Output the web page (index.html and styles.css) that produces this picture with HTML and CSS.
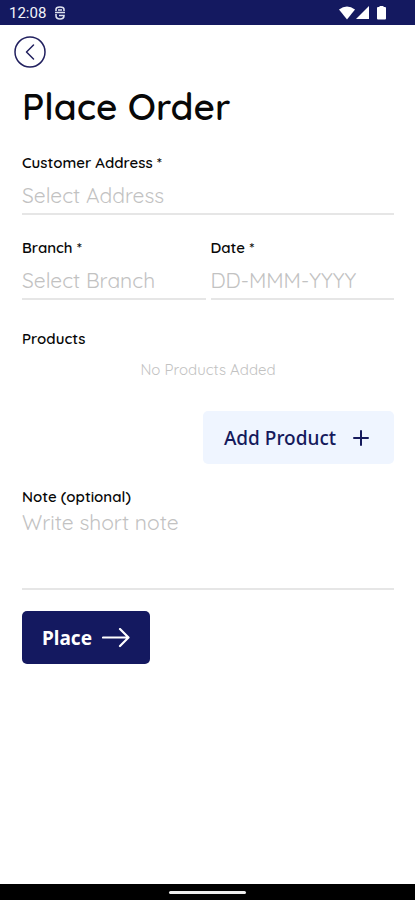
FILE: index.html
```html
<!DOCTYPE html>
<html lang="en">
<head>
<meta charset="utf-8">
<meta name="viewport" content="width=device-width, initial-scale=1">
<title>Place Order</title>
<link rel="stylesheet" href="styles.css">
</head>
<body>
<div class="status">
  <span class="clock">12:08</span>
  <svg class="app-icon" viewBox="0 0 12 14" width="12" height="14" aria-hidden="true"><path d="M2 5V3.500Q2 1 6 1t4 2.500V5M1 6.500h10M4 4h4M2 8v1.500Q2 13 6 13t4-3.500H5" fill="none" stroke="#dfe3ef" stroke-width="1.600"/></svg>
  <svg class="signals" viewBox="0 0 48 16" width="48" height="16" aria-hidden="true"><g fill="#fff"><path d="M0 4.500Q8-1.500 16 4.500L8 14.500z"/><path d="M30 1v13H17z"/><path d="M38 3q0-1 1-1h1.500V1h4v1H46q1 0 1 1v10.500q0 1-1 1h-7q-1 0-1-1z"/></g></svg>
</div>
<main class="page">
  <button class="back" type="button" aria-label="Back"><svg viewBox="0 0 32 32" width="32" height="32"><circle cx="16" cy="16" r="15" fill="none" stroke="#21205f" stroke-width="1.500"/><path d="M19.500 9L12.500 16l7 7" fill="none" stroke="#21205f" stroke-width="1.500" stroke-linecap="round" stroke-linejoin="round"/></svg></button>
  <form class="form">
    <h1>Place Order</h1>
    <div class="field">
      <label for="address">Customer Address *</label>
      <input id="address" type="text" placeholder="Select Address">
    </div>
    <div class="pair">
      <div class="field">
        <label for="branch">Branch *</label>
        <input id="branch" type="text" placeholder="Select Branch">
      </div>
      <div class="field">
        <label for="date">Date *</label>
        <input id="date" type="text" placeholder="DD-MMM-YYYY">
      </div>
    </div>
    <section class="products">
      <h2>Products</h2>
      <p>No Products Added</p>
      <button class="add" type="button"><span>Add Product</span><svg viewBox="0 0 16 16" width="16" height="16" aria-hidden="true"><path d="M8 1v14M1 8h14" stroke="#151a5c" stroke-width="2" stroke-linecap="round"/></svg></button>
    </section>
    <div class="field note">
      <label for="note">Note (optional)</label>
      <textarea id="note" placeholder="Write short note"></textarea>
    </div>
    <button class="place" type="submit"><span>Place</span><svg viewBox="0 0 28 20" width="28" height="20" aria-hidden="true"><path d="M1 9.500h25M18 1l8.500 8.500L18 18" fill="none" stroke="#fff" stroke-width="2.200" stroke-linecap="round" stroke-linejoin="round"/></svg></button>
  </form>
</main>
<div class="nav"><span class="handle"></span></div>
</body>
</html>
```
FILE: styles.css
```css
* { box-sizing: border-box; }

body {
  margin: 0;
  min-height: 100vh;
  display: flex;
  flex-direction: column;
  background: #fff;
  color: #080808;
  font-family: Quicksand, Lato, sans-serif;
}

button, input, textarea { font-family: inherit; }
button { border: 0; cursor: pointer; }

.status {
  display: flex;
  align-items: center;
  height: 25px;
  padding: 0 28px 0 9px;
  background: #141960;
  color: #f2f3f8;
}
.clock { font: 400 15px/24px Roboto, sans-serif; }
.app-icon { margin-left: 8px; }
.signals { margin-left: auto; }

.page { flex: 1; padding: 11px 0 24px; }
.back {
  display: block;
  margin-left: 14px;
  padding: 0;
  background: none;
}
.back svg { display: block; }

.form { padding: 15px 21px 0 22px; }
h1 {
  margin: 0 0 24px;
  font-size: 37px;
  font-weight: 600;
  line-height: 46px;
}

label, h2 {
  display: block;
  margin: 0;
  font-size: 15px;
  font-weight: 600;
  line-height: 20px;
}

.field { min-width: 0; }
input, textarea {
  display: block;
  width: 100%;
  padding: 0;
  border: 0;
  border-bottom: 2px solid #e6e6e6;
  border-radius: 0;
  outline: 0;
  background: none;
  color: #080808;
  font-size: 21px;
  font-weight: 400;
}
input { height: 42px; padding-top: 3px; }
::placeholder { color: #c2c2c2; opacity: 1; }

.pair {
  display: grid;
  grid-template-columns: 1fr 1fr;
  gap: 5px;
  margin: 23px 0 29px;
}

.products { display: flex; flex-direction: column; }
.products p {
  margin: 11px 0 31px;
  color: #c2c2c2;
  font-size: 15px;
  font-weight: 400;
  line-height: 20px;
  text-align: center;
}
.add, .place {
  display: flex;
  align-items: center;
  height: 53px;
  padding: 0 21px;
  border-radius: 5px;
  font-family: "Noto Sans", sans-serif;
  font-size: 19px;
  line-height: 24px;
}
.add {
  align-self: flex-end;
  gap: 17px;
  padding-right: 25px;
  background: #eff5ff;
  color: #151a5c;
  font-weight: 500;
}

.note { margin: 23px 0 21px; }
textarea {
  height: 83px;
  padding-top: 1px;
  line-height: 28px;
  resize: none;
}
.place {
  gap: 10px;
  padding: 0 20px;
  background: #141960;
  color: #fff;
  font-weight: 700;
}

.nav {
  display: flex;
  align-items: center;
  justify-content: center;
  height: 16px;
  background: #000;
}
.handle {
  width: 77px;
  height: 3px;
  border-radius: 2px;
  background: #eee;
}
```
